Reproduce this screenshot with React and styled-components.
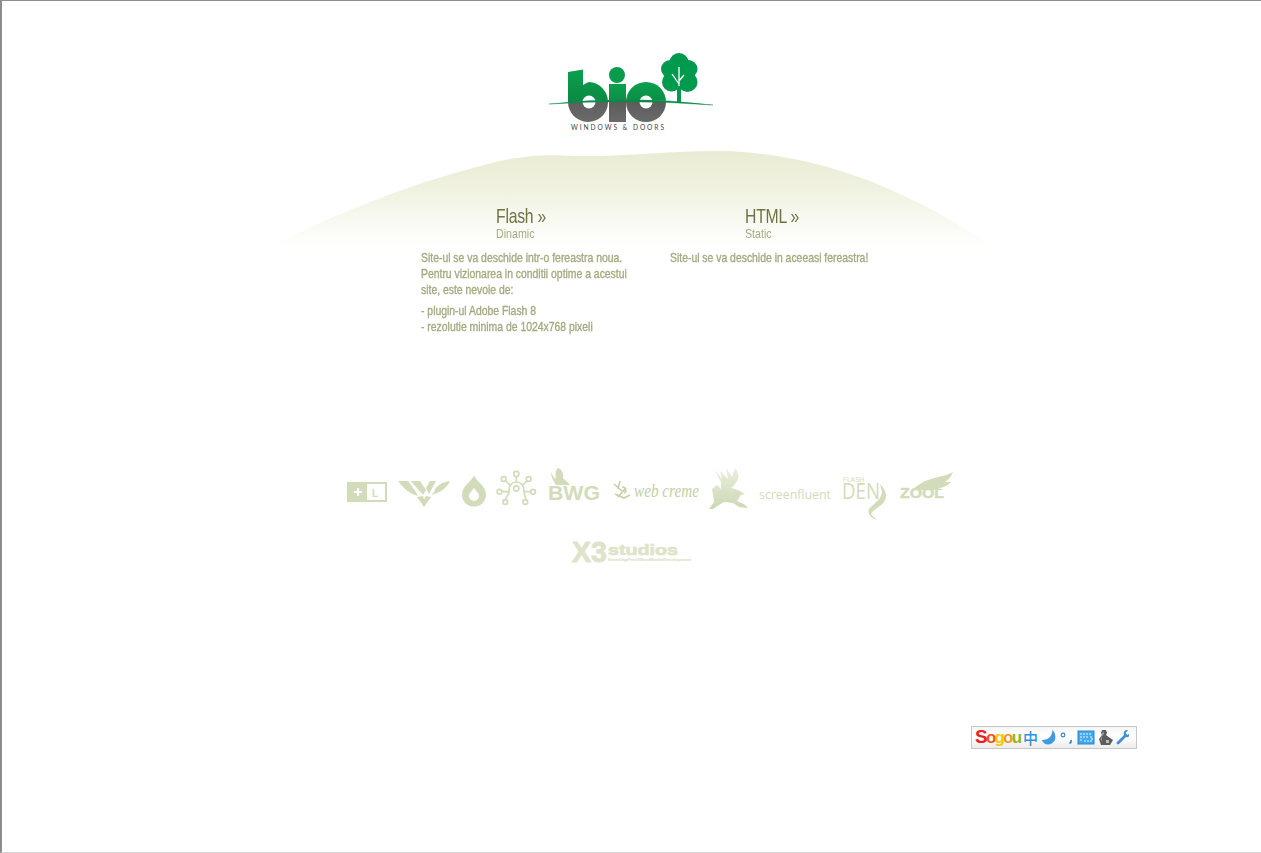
import React from "react";
import styled, { createGlobalStyle } from "styled-components";

const Global = createGlobalStyle`
  html, body { margin: 0; padding: 0; background: #fff; }
  body { font-family: "Liberation Sans", Arial, sans-serif; }
`;

const Page = styled.div`
  position: relative;
  box-sizing: border-box;
  height: 853px;
  overflow: hidden;
  padding-left: 248px;
  border-top: 1px solid #8d8d8d;
  border-left: 2px solid #8d8d8d;
  border-bottom: 1px solid #d4d4d8;
  background: #fff;
`;
const Column = styled.main`
  width: 760px;
  display: flex;
  flex-direction: column;
`;
const LogoSvg = styled.svg`
  display: block;
  width: 170px;
  height: 90px;
  margin: 49px 0 0 295px;
`;
const Hill = styled.svg`
  display: block;
  width: 760px;
  height: 110px;
  margin-top: 7px;
`;
const Choices = styled.section`
  display: grid;
  grid-template-columns: 249px 249px;
  margin: -52px 0 0 171px;
`;
const Choice = styled.div`
  display: flex;
  flex-direction: column;
`;
const Heading = styled.a`
  display: block;
  margin-left: 75px;
  font-size: 21px;
  line-height: 21px;
  color: #6f7343;
  letter-spacing: -0.3px;
  white-space: nowrap;
  transform: scaleX(0.75);
  transform-origin: left center;
`;
const Sub = styled.span`
  display: block;
  margin-left: 75px;
  font-size: 13px;
  line-height: 15px;
  color: #a6ab82;
  transform: scaleX(0.82);
  transform-origin: left center;
`;
const Body = styled.p`
  margin: ${(p) => p.$top}px 0 0;
  width: 265px;
  font-size: 13px;
  line-height: 16px;
  font-weight: 400;
  color: #a4a97f;
  -webkit-text-stroke: 0.35px #a4a97f;
  transform: scaleX(0.8);
  transform-origin: left center;
`;
const Sponsors = styled.section`
  display: flex;
  gap: 9px;
  margin: 133px 0 0 97px;
`;
const Mark = styled.svg`
  display: block;
  flex: none;
  height: 52px;
  overflow: visible;
`;
const X3 = styled.svg`
  display: block;
  width: 124px;
  height: 26px;
  margin: 20px 0 0 322px;
  overflow: visible;
`;
const Tray = styled.aside`
  position: absolute;
  left: 969px;
  top: 725px;
  box-sizing: border-box;
  width: 166px;
  height: 23px;
  display: flex;
  align-items: center;
  padding-left: 3px;
  border: 1px solid #c6c6c6;
  background: linear-gradient(#f7f7f7, #fff 45%, #ececec);
`;
const Brand = styled.span`
  display: flex;
  align-items: baseline;
  width: 48px;
  font: 700 17px/20px "Liberation Sans", sans-serif;
  letter-spacing: -1.8px;
`;
const Letter = styled.span`
  color: ${(p) => p.$c};
  font-size: ${(p) => p.$size || 17}px;
`;
const Zh = styled.span`
  width: 15px;
  text-align: center;
  font: 500 15px/20px "Noto Sans CJK SC", sans-serif;
  color: #2f94d8;
`;
const TrayIcon = styled.svg`
  display: block;
  flex: none;
  height: 21px;
`;

const marks = "#d2dcba";

function Logo() {
  return (
    <LogoSvg viewBox="545 49 170 90">
      <defs>
        <linearGradient id="lg" x1="0" y1="0" x2="0" y2="1">
          <stop offset="0" stopColor="#0aa04d" />
          <stop offset="1" stopColor="#0c7a40" />
        </linearGradient>
        <linearGradient id="lgray" x1="0" y1="0" x2="0" y2="1">
          <stop offset="0" stopColor="#4e4e4e" />
          <stop offset="1" stopColor="#6a6a6a" />
        </linearGradient>
        <clipPath id="above"><path d="M540 40H720V104Q630 94 540 104Z" /></clipPath>
        <clipPath id="below"><path d="M540 130H720V104Q630 94 540 104Z" /></clipPath>
        <mask id="holes">
          <rect x="540" y="40" width="180" height="100" fill="#fff" />
          <circle cx="589" cy="101" r="6.5" fill="#000" />
          <circle cx="646" cy="101" r="6.5" fill="#000" />
        </mask>
        <g id="word">
          <path d="M568 71L583 68.5V84Q588 81 589 81A20 20 0 1 1 568 101Z" />
          <rect x="609" y="83" width="17" height="38" />
          <circle cx="646" cy="101" r="20" />
        </g>
      </defs>
      <g mask="url(#holes)">
        <use href="#word" fill="url(#lg)" clipPath="url(#above)" />
        <use href="#word" fill="url(#lgray)" clipPath="url(#below)" />
      </g>
      <circle cx="617" cy="74" r="8" fill="#0a9a4c" />
      <g fill="#009a4e">
        <circle cx="679" cy="61.5" r="9.5" />
        <circle cx="670" cy="68" r="9" />
        <circle cx="688.5" cy="68" r="9" />
        <circle cx="671.5" cy="81" r="9.5" />
        <circle cx="687.5" cy="81" r="10" />
        <circle cx="679" cy="72" r="10" />
        <rect x="677" y="80" width="4" height="21" />
      </g>
      <path d="M679 85V76M679 83L672 73M679 80L684 74M679 76V66" stroke="#fff" strokeWidth="1.3" fill="none" />
      <path d="M549 103Q630 94 713 104Q630 98 549 103Z" fill="#0a8a46" stroke="#0a8a46" strokeWidth=".4" />
      <text x="571" y="129" fontFamily="Lato, sans-serif" fontSize="6.6" textLength="93" fill="#444">WINDOWS &amp; DOORS</text>
    </LogoSvg>
  );
}

function SponsorMarks() {
  return (
    <Sponsors>
      <Mark viewBox="0 0 42 52" width="42">
        <rect x="0" y="14" width="40" height="20" fill={marks} />
        <rect x="20" y="16" width="18" height="16" fill="#fff" />
        <path d="M7 23h3v-3h2v3h3v2h-3v3h-2v-3h-3z" fill="#fff" />
        <text x="25" y="28.5" fontFamily="Liberation Sans, sans-serif" fontWeight="700" fontSize="10" fill={marks}>L</text>
      </Mark>
      <Mark viewBox="0 0 55 52" width="55">
        <g fill={marks}>
          <path d="M0 13H10L18 24L20 28C12 26 5 20 0 13Z" />
          <path d="M13 13H22L28 22L25 27Z" />
          <path d="M19 29L25 28L26 31L28 28L33 29L26 39Z" />
          <path d="M28 20L32 13H38L31 26Z" />
          <path d="M36 24C38 17 45 14 52 13C49 20 42 25 33 27Z" />
        </g>
      </Mark>
      <Mark viewBox="0 0 26 52" width="26">
        <path fillRule="evenodd" fill={marks} d="M12 7.500C15 14 24 18 24 27A12 11.500 0 0 1 0 27C0 18 9 14 12 7.500ZM12 20C10 23 7 25 7 28A5 5 0 0 0 17 28C17 25 14 23 12 20Z" />
      </Mark>
      <Mark viewBox="0 0 42 52" width="42">
        <g fill="none" stroke={marks} strokeWidth="1.7">
          <circle cx="19.3" cy="20.5" r="2.6" />
          <circle cx="19.3" cy="6" r="2.6" />
          <circle cx="6.700" cy="11" r="2.400" />
          <circle cx="31.700" cy="11" r="2.400" />
          <circle cx="2.500" cy="23.700" r="2.400" />
          <circle cx="36" cy="23.700" r="2.400" />
          <circle cx="8.300" cy="34" r="2.400" />
          <circle cx="28.300" cy="34" r="2.400" />
          <path d="M19.300 9V14M8.700 13L14 18M29.700 13L25 18M5 23.700H12C12 17 15 14 19.300 14C24 14 27 17 27 23.700H33.500M12 23.700C12 27 9 28 8.500 31.500M27 23.700C27 27 29 28 28.500 31.500" />
        </g>
      </Mark>
      <Mark viewBox="0 0 55 52" width="55">
        <path fill={marks} d="M3 4C5 8 6 10 8 11C7 5 8 1 10 0C14 1 16 6 15 10C17 12 20 14 22 17H8C5 13 3 8 3 4Z" />
        <text x="0" y="32" fontFamily="Liberation Sans, sans-serif" fontWeight="700" fontSize="21" textLength="52" lengthAdjust="spacingAndGlyphs" fill={marks}>BWG</text>
      </Mark>
      <Mark viewBox="0 0 87 52" width="87">
        <g fill="none" stroke="#c4d0a6" strokeWidth="1.6">
          <path d="M2 16L10 23M8 13L6 21M14 20L6 29M3 26L12 30L18 27" />
          <path d="M10 19C14 19 15 24 12 25" />
        </g>
        <text x="22" y="29" fontFamily="Liberation Serif, serif" fontStyle="italic" fontSize="19" textLength="65" lengthAdjust="spacingAndGlyphs" fill="#c4d0a6">web creme</text>
      </Mark>
      <Mark viewBox="0 0 42 52" width="42">
        <defs>
          <linearGradient id="gf" x1="0" y1="0" x2="0" y2="1">
            <stop offset="0" stopColor="#e9eedd" />
            <stop offset="1" stopColor="#cdd8b4" />
          </linearGradient>
        </defs>
        <path fill="url(#gf)" d="M6 1L14 11L12 3L20 11L18 0L24 9L27 0C30 4 31 8 30 11C28 15 26 18 23 20L27 21L30 22L37 26L33 27L31 30L29 33L36 36L40 40L31 39L25 35L16 34L11 37L5 41H1L6 34L5 27L4 21L9 17L13 21L13 14Z" />
      </Mark>
      <Mark viewBox="0 0 74 52" width="74">
        <text x="0" y="30.500" fontFamily="Open Sans, sans-serif" fontSize="12.300" textLength="72" lengthAdjust="spacingAndGlyphs" fill={marks}>screenfluent</text>
      </Mark>
      <Mark viewBox="0 0 49 52" width="49">
        <text x="1" y="13.500" fontFamily="Liberation Sans, sans-serif" fontSize="6.500" fill={marks}>FLASH</text>
        <text x="0" y="30.500" fontFamily="Open Sans, sans-serif" fontSize="21" textLength="38" lengthAdjust="spacingAndGlyphs" fill={marks}>DEN</text>
        <path fill={marks} d="M38 16C46 24 46 32 38 38C34 41 30 43 29 46C30 48 33 50 35 52C28 50 24 44 28 40C33 35 40 30 40 24Z" />
      </Mark>
      <Mark viewBox="0 0 53 52" width="53">
        <path fill={marks} d="M12 22C18 17 22 13 38 9C44 8 49 6 53 4C51 9 48 12 45 14L51 14C47 18 43 20 38 20L44 22H12Z" />
        <text x="0" y="30" fontFamily="Liberation Sans, sans-serif" fontWeight="700" fontSize="14" textLength="44" lengthAdjust="spacingAndGlyphs" stroke={marks} strokeWidth=".5" fill={marks}>ZOOL</text>
      </Mark>
    </Sponsors>
  );
}

function Studio() {
  const ink = "#dfe3c9";
  return (
    <X3 viewBox="0 0 124 26">
      <g fontFamily="Liberation Sans, sans-serif" fontWeight="700" fill={ink} stroke={ink}>
        <text x="0" y="22" fontSize="29" strokeWidth=".8" textLength="35" lengthAdjust="spacingAndGlyphs">X3</text>
        <text x="36" y="15" fontSize="15" strokeWidth=".7" textLength="70" lengthAdjust="spacingAndGlyphs">studios</text>
        <text x="36" y="20.500" fontSize="4" strokeWidth=".15" textLength="83" lengthAdjust="spacingAndGlyphs">Branding/Print/WordMedia/Development</text>
      </g>
    </X3>
  );
}

function SogouTray() {
  return (
    <Tray>
      <Brand>
        <Letter $c="#ee1c25" $size={19}>S</Letter>
        <Letter $c="#f2511c">o</Letter>
        <Letter $c="#f6c800">g</Letter>
        <Letter $c="#f09a1e">o</Letter>
        <Letter $c="#8cb820">u</Letter>
      </Brand>
      <Zh>中</Zh>
      <TrayIcon viewBox="0 0 18 21" width="18">
        <path fill="#3f9be0" d="M14 3C17 10 12 14 4 13C5 18 13 20 17 13C18 9 17 5 14 3Z" />
        <path fill="#3f9be0" d="M14 3C15 8 11 13 4 13C7 16 13 15 15 11C16 9 15 5 14 3Z" />
      </TrayIcon>
      <TrayIcon viewBox="0 0 21 21" width="21">
        <circle cx="7" cy="8" r="1.900" fill="none" stroke="#2f7fd0" strokeWidth="1.100" />
        <path d="M15 13C15.500 14.500 15 15.500 13.500 16.500" fill="none" stroke="#2f7fd0" strokeWidth="1.600" />
      </TrayIcon>
      <TrayIcon viewBox="0 0 18 21" width="18">
        <rect x="1" y="4" width="16" height="13" fill="#45a8ec" stroke="#2f86d0" />
        <path d="M3 7h12M3 10h9M3 13h3M13 10h2v4H7" stroke="#e8f4fc" strokeWidth="1.200" strokeDasharray="2 1" fill="none" />
      </TrayIcon>
      <TrayIcon viewBox="-4 0 18 21" width="18">
        <path fill="#5c5c5c" d="M3 3H7L8 6L7 8L11 11L14 13L11 18H2L0 12L3 8L2 6Z" />
        <path fill="#a8a8a8" d="M4 4L5 7L3 9L3 15L2 12L3 8Z" />
        <rect x="7" y="13" width="3" height="3" fill="#bbb" />
      </TrayIcon>
      <TrayIcon viewBox="-2 0 16 21" width="16">
        <path fill="#3f8fdc" d="M12 3C9 3 8 6 9 8L2 15C1 16 2 18 4 17L11 10C13 11 15 9 15 6L12.500 8L10.500 6L13 3.400Z" />
      </TrayIcon>
    </Tray>
  );
}

export default function App() {
  return (
    <>
      <Global />
      <Page>
        <Column>
          <Logo />
          <Hill viewBox="0 0 760 110" preserveAspectRatio="none">
            <defs>
              <linearGradient id="hill" x1="0" y1="0" x2="0" y2="1">
                <stop offset="0" stopColor="#e9ebd3" />
                <stop offset=".4" stopColor="#f0f2e1" />
                <stop offset="1" stopColor="#ffffff" />
              </linearGradient>
            </defs>
            <path fill="url(#hill)" d="M20 100C90 64 170 33 250 14C285 7 300 8 325 9C370 10 420 4 470 4C520 5 570 15 620 34C670 54 710 78 745 100Z" />
          </Hill>
          <Choices>
            <Choice>
              <Heading>Flash »</Heading>
              <Sub>Dinamic</Sub>
              <Body $top={9}>Site-ul se va deschide intr-o fereastra noua. Pentru vizionarea in conditii optime a acestui site, este nevoie de:</Body>
              <Body $top={5}>- plugin-ul Adobe Flash 8<br />- rezolutie minima de 1024x768 pixeli</Body>
            </Choice>
            <Choice>
              <Heading>HTML »</Heading>
              <Sub>Static</Sub>
              <Body $top={9}>Site-ul se va deschide in aceeasi fereastra!</Body>
            </Choice>
          </Choices>
          <SponsorMarks />
          <Studio />
        </Column>
        <SogouTray />
      </Page>
    </>
  );
}
